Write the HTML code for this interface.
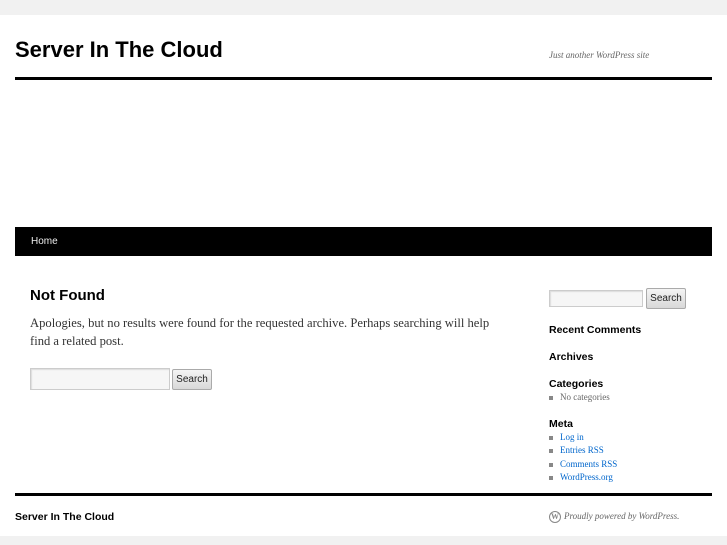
<!DOCTYPE html>
<html><head><meta charset="utf-8"><style>
*{margin:0;padding:0;box-sizing:border-box}
body{width:727px;height:545px;background:#f1f1f1;font-family:"Liberation Serif",serif;overflow:hidden;position:relative}
#wrap{position:absolute;left:0;top:15px;width:727px;height:521px;background:#fff}
.a{position:absolute}
.h{font-family:"Liberation Sans",sans-serif;font-weight:bold;color:#000}
.inp{position:absolute;border:1px solid #ccc;background:#f6f6f6;box-shadow:inset 1px 1px 1px rgba(0,0,0,.1)}
.btn{position:absolute;border:1px solid #aaa;border-radius:2px;background:linear-gradient(#f4f4f4,#d8d8d8);font:10px "Liberation Sans",sans-serif;color:#222;text-align:center;line-height:19px}
ul{list-style:none}
li{font-size:9px;color:#666;height:13.4px;line-height:13px;padding-left:11px;position:relative}
li:before{content:"";position:absolute;left:0;top:5px;width:4px;height:4px;background:#888}
li a{color:#0066cc}
</style></head><body>
<div id="wrap">
<div class="a h" style="left:15px;top:22px;font-size:22px;">Server In The Cloud</div>
<div class="a" style="left:549px;top:35px;font-size:9px;font-style:italic;color:#666">Just another WordPress site</div>
<div class="a" style="left:15px;top:62px;width:697px;height:3px;background:#000"></div>
<div class="a" style="left:15px;top:212px;width:697px;height:29px;background:#000"></div>
<div class="a" style="left:31px;top:221px;font:10px 'Liberation Sans',sans-serif;color:#eee">Home</div>
<div class="a h" style="left:30px;top:272px;font-size:15px">Not Found</div>
<div class="a" style="left:30px;top:299px;width:475px;font-size:12.6px;line-height:18px;color:#333">Apologies, but no results were found for the requested archive. Perhaps searching will help find a related post.</div>
<div class="inp" style="left:30px;top:353px;width:140px;height:22px"></div>
<div class="btn" style="left:172px;top:354px;width:40px;height:21px">Search</div>
<div class="inp" style="left:549px;top:275px;width:94px;height:17px"></div>
<div class="btn" style="left:646px;top:273px;width:40px;height:21px">Search</div>
<div class="a h" style="left:549px;top:309px;font-size:10.5px">Recent Comments</div>
<div class="a h" style="left:549px;top:336px;font-size:10.5px">Archives</div>
<div class="a h" style="left:549px;top:363px;font-size:10.5px">Categories</div>
<ul class="a" style="left:549px;top:376px"><li>No categories</li></ul>
<div class="a h" style="left:549px;top:403px;font-size:10.5px">Meta</div>
<ul class="a" style="left:549px;top:416px"><li><a>Log in</a></li><li><a>Entries RSS</a></li><li><a>Comments RSS</a></li><li><a>WordPress.org</a></li></ul>
<div class="a" style="left:15px;top:478px;width:697px;height:3px;background:#000"></div>
<div class="a h" style="left:15px;top:496px;font-size:10.5px">Server In The Cloud</div>
<div class="a" style="left:549px;top:496px;width:12px;height:12px;border-radius:50%;border:1.5px solid #888;font:bold 8px 'Liberation Serif';color:#888;text-align:center;line-height:9px">W</div>
<div class="a" style="left:564px;top:496px;font-size:9px;font-style:italic;color:#666">Proudly powered by WordPress.</div>
</div>
</body></html>
